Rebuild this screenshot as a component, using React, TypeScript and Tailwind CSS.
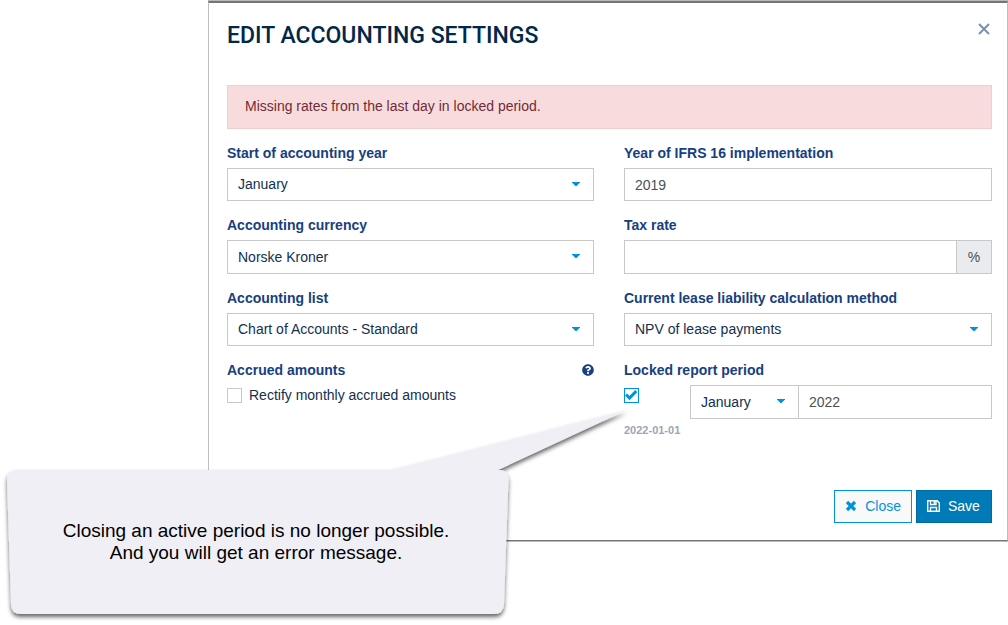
import React, { useState } from 'react';
import { FaQuestionCircle } from 'react-icons/fa';
import clsx from 'clsx';

const months = [
  'January', 'February', 'March', 'April', 'May', 'June', 'July',
  'August', 'September', 'October', 'November', 'December',
];

const fieldClass =
  'w-full border border-[#c8c8c8] bg-white text-sm text-[#4b5157] outline-none focus:border-[#0093dd]';

type SelectProps = {
  id: string;
  options: string[];
  label?: string;
  className?: string;
};

const Select = ({ id, options, label, className }: SelectProps) => (
  <div className={clsx('relative', className)}>
    <select
      id={id}
      aria-label={label}
      className="block h-full w-full appearance-none border border-[#c8c8c8] bg-white pl-2.5 pr-8 pb-px text-sm text-[#12304f] outline-none focus:border-[#0093dd]"
    >
      {options.map((option) => (
        <option key={option}>{option}</option>
      ))}
    </select>
    <svg
      viewBox="0 0 8 4"
      className="pointer-events-none absolute right-3.5 top-3.5 h-1 w-2 fill-[#0093dd]"
    >
      <path d="M0 0h8v.6L4.600 4h-1.200L0 .6z" />
    </svg>
  </div>
);

const Label = ({ htmlFor, children }: { htmlFor?: string; children: React.ReactNode }) => (
  <label htmlFor={htmlFor} className="block h-6 text-sm leading-[18px] font-bold text-[#17407f]">
    {children}
  </label>
);

type CheckboxProps = {
  id: string;
  checked: boolean;
  onChange: (checked: boolean) => void;
};

const Checkbox = ({ id, checked, onChange }: CheckboxProps) => (
  <span className="relative block size-[15px]">
    <input
      id={id}
      type="checkbox"
      checked={checked}
      onChange={(e) => onChange(e.target.checked)}
      className="block size-[15px] appearance-none border border-[#c8c8c8] bg-white checked:border-[#0093dd]"
    />
    {checked && (
      <svg
        viewBox="0 0 12 12"
        className="pointer-events-none absolute left-px top-px size-3"
        fill="none"
        stroke="#0093dd"
        strokeWidth="3"
      >
        <path d="M1 5.500l3.500 3.500L11.300 2" />
      </svg>
    )}
  </span>
);

const CrossIcon = () => (
  <svg viewBox="0 0 12 12" className="size-3" fill="none" stroke="currentColor" strokeWidth="3.2">
    <path d="M2 2l8 8M10 2l-8 8" />
  </svg>
);

const FloppyIcon = () => (
  <svg viewBox="0 0 13 12" className="h-3 w-[13px]" fill="none" stroke="currentColor">
    <path d="M.7.7h9.400l2.200 2.200v8.400H.7z" strokeWidth="1.4" />
    <path d="M3.500 11V7.500h6V11" strokeWidth="1.3" />
    <path d="M3.500 1v3.500h5.500V1" strokeWidth="1.3" />
    <path d="M7.500 1v2.800" strokeWidth="1.8" />
  </svg>
);

const Callout = () => (
  <div className="absolute left-0 top-[400px] h-[225px] w-[640px] pointer-events-none">
    <svg viewBox="0 0 640 225" className="absolute inset-0 size-full">
      <defs>
        <filter id="callout-shadow" x="-5%" y="-5%" width="110%" height="115%">
          <feDropShadow dx="0" dy="3" stdDeviation="2" floodColor="#000" floodOpacity="0.6" />
        </filter>
      </defs>
      <path
        filter="url(#callout-shadow)"
        fill="#f0eff5"
        d="M17 70H391L627 10L498 70H499Q508 70 508.500 79L504 204Q503.500 214 494 214H21Q11 214 11 204L7 80Q7 70 17 70Z"
      />
    </svg>
    <p className="absolute left-0 top-[120px] w-[512px] text-center text-[19px] leading-[22px] text-black">
      Closing an active period is no longer possible.
      <br />
      And you will get an error message.
    </p>
  </div>
);

const App = () => {
  const [rectify, setRectify] = useState(false);
  const [locked, setLocked] = useState(true);

  return (
    <div className="relative min-h-screen bg-white pl-[208px] font-['Liberation_Sans',Arial,sans-serif]">
      <div className="border-y border-[#b9b9b9]">
        <form
          onSubmit={(e) => e.preventDefault()}
          className="border-x border-b border-t-2 border-x-[#bdbdbd] border-b-[#757575] border-t-[#757575] pb-[17px] pl-[18px] pr-[15px]"
        >
          {/* Header */}
          <div className="flex h-[82px] items-start justify-between pt-4">
            <h1 className="font-[Roboto] text-[23px] leading-[34px] font-medium text-[#00284b]">
              EDIT ACCOUNTING SETTINGS
            </h1>
            <button type="button" aria-label="Close dialog" className="mt-1 mr-0.5 text-[#7c91a3]">
              <svg viewBox="0 0 12 12" className="size-3" fill="none" stroke="currentColor" strokeWidth="2">
                <path d="M1 1l10 10M11 1L1 11" />
              </svg>
            </button>
          </div>

          {/* Error message */}
          <div
            role="alert"
            className="mb-[15px] h-11 border border-[#f3cccc] bg-[#f8dcdd] px-[17px] text-sm leading-10 text-[#722b34]"
          >
            Missing rates from the last day in locked period.
          </div>

          {/* Settings */}
          <div className="grid grid-cols-[367fr_368fr] gap-x-[30px] gap-y-[15px]">
            <div>
              <Label htmlFor="start-month">Start of accounting year</Label>
              <Select id="start-month" options={months} className="h-[33px]" />
            </div>
            <div>
              <Label htmlFor="ifrs-year">Year of IFRS 16 implementation</Label>
              <input id="ifrs-year" defaultValue="2019" className={clsx(fieldClass, 'h-[33px] px-2.5')} />
            </div>

            <div>
              <Label htmlFor="currency">Accounting currency</Label>
              <Select id="currency" options={['Norske Kroner', 'Euro', 'US Dollar']} className="h-[34px]" />
            </div>
            <div>
              <Label htmlFor="tax-rate">Tax rate</Label>
              <div className="flex h-[34px]">
                <input id="tax-rate" className={clsx(fieldClass, 'px-2.5')} />
                <span className="flex w-[35px] shrink-0 items-center justify-center border border-l-0 border-[#c8c8c8] bg-[#e9ebef] text-sm text-[#4b5157]">
                  %
                </span>
              </div>
            </div>

            <div>
              <Label htmlFor="account-list">Accounting list</Label>
              <Select id="account-list" options={['Chart of Accounts - Standard']} className="h-[33px]" />
            </div>
            <div>
              <Label htmlFor="method">Current lease liability calculation method</Label>
              <Select id="method" options={['NPV of lease payments']} className="h-[33px]" />
            </div>

            <div>
              <div className="flex justify-between">
                <Label htmlFor="rectify">Accrued amounts</Label>
                <FaQuestionCircle className="mt-[3px] size-3 text-[#17407f]" />
              </div>
              <div className="flex items-center gap-[7px]">
                <Checkbox id="rectify" checked={rectify} onChange={setRectify} />
                <label htmlFor="rectify" className="text-sm text-[#12304f]">
                  Rectify monthly accrued amounts
                </label>
              </div>
            </div>
            <div>
              <Label htmlFor="locked">Locked report period</Label>
              <div className="flex">
                <div className="w-[66px] shrink-0 pt-[3px]">
                  <Checkbox id="locked" checked={locked} onChange={setLocked} />
                </div>
                <div className="flex h-[34px] grow">
                  <Select id="locked-month" label="Locked month" options={months} className="w-[109px] shrink-0" />
                  <input
                    aria-label="Locked year"
                    defaultValue="2022"
                    className={clsx(fieldClass, 'min-w-0 border-l-0 px-2.5')}
                  />
                </div>
              </div>
              <p className="pt-[3px] text-[11px] leading-4 font-bold text-[#9aa5b8]">2022-01-01</p>
            </div>
          </div>

          {/* Actions */}
          <div className="mt-[52px] flex justify-end gap-1">
            <button
              type="button"
              className="flex h-[33px] items-center gap-2 border border-[#0093dd] bg-[#f9f9f9] px-2.5 pb-px text-sm text-[#0093dd]"
            >
              <CrossIcon />
              Close
            </button>
            <button
              type="submit"
              className="flex h-[33px] min-w-[76px] items-center gap-2 border border-[#006ba3] bg-[#007bb8] px-2.5 pb-px text-sm text-white"
            >
              <FloppyIcon />
              Save
            </button>
          </div>
        </form>
      </div>

      <Callout />
    </div>
  );
};

export default App;
